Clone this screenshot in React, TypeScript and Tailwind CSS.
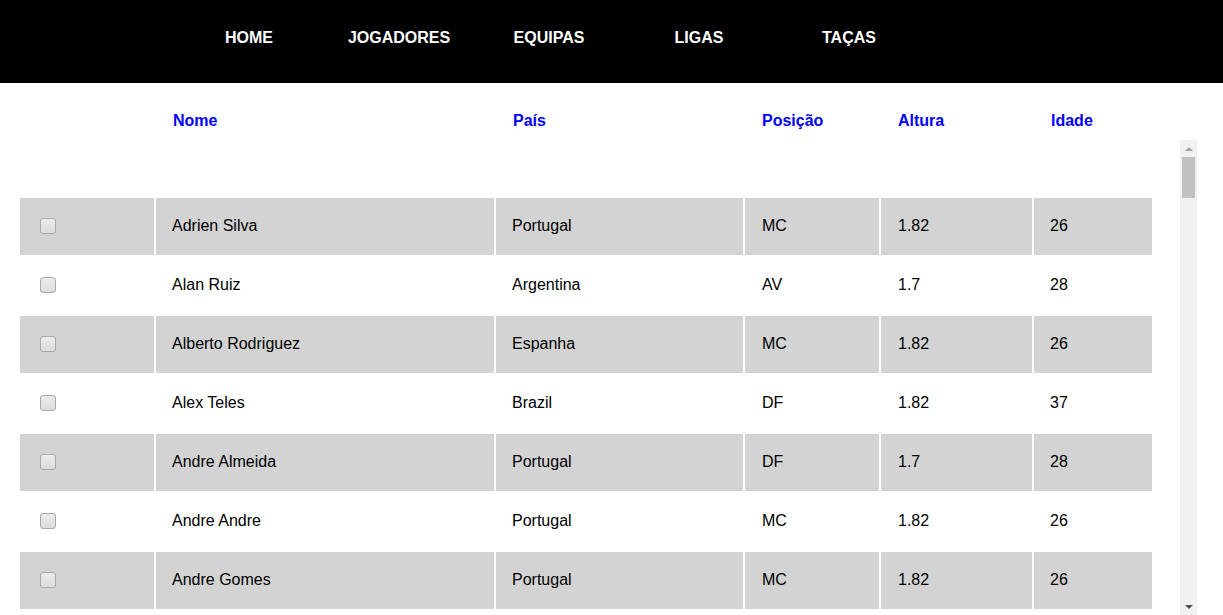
const navItems = ["HOME", "JOGADORES", "EQUIPAS", "LIGAS", "TAÇAS"];

const columns = [
  { label: "Nome", width: "w-[338px]" },
  { label: "País", width: "w-[247px]" },
  { label: "Posição", width: "w-[134px]" },
  { label: "Altura", width: "w-[151px]" },
  { label: "Idade", width: "w-[118px]" },
];

const players = [
  ["Adrien Silva", "Portugal", "MC", "1.82", "26"],
  ["Alan Ruiz", "Argentina", "AV", "1.7", "28"],
  ["Alberto Rodriguez", "Espanha", "MC", "1.82", "26"],
  ["Alex Teles", "Brazil", "DF", "1.82", "37"],
  ["Andre Almeida", "Portugal", "DF", "1.7", "28"],
  ["Andre Andre", "Portugal", "MC", "1.82", "26"],
  ["Andre Gomes", "Portugal", "MC", "1.82", "26"],
];

function Checkbox() {
  return (
    <div className="h-4 w-4 rounded-[3px] border border-[#a8a8a8] bg-gradient-to-b from-[#ececec] to-[#dcdcdc]" />
  );
}

function Scrollbar() {
  return (
    <div className="flex w-[17px] flex-col bg-[#f1f1f1]">
      <div className="flex h-[17px] items-center justify-center">
        <div className="h-0 w-0 border-x-[4px] border-b-[4px] border-x-transparent border-b-[#a3a3a3]" />
      </div>
      <div className="mx-[2px] h-[41px] bg-[#c1c1c1]" />
      <div className="flex-1" />
      <div className="flex h-[17px] items-center justify-center">
        <div className="h-0 w-0 border-x-[4px] border-t-[4px] border-x-transparent border-t-[#505050]" />
      </div>
    </div>
  );
}

export default function App() {
  return (
    <div className="h-[615px] overflow-hidden bg-white font-['Liberation_Sans',Arial,sans-serif] text-base">
      <nav className="flex h-[83px] bg-black pl-[174px] pt-[29px]">
        {navItems.map((item) => (
          <a
            key={item}
            className="w-[150px] text-center font-bold leading-[18px] text-white"
          >
            {item}
          </a>
        ))}
      </nav>

      <div className="flex h-[57px] gap-[2px] pl-[156px] pt-[29px]">
        {columns.map((col) => (
          <div
            key={col.label}
            className={`${col.width} pl-[17px] font-bold leading-[18px] text-[#0000ff]`}
          >
            {col.label}
          </div>
        ))}
      </div>

      <div className="ml-5 flex h-[475px] w-[1177px]">
        <div className="flex-1 overflow-hidden pt-[58px]">
          <div className="flex flex-col gap-[2px]">
            {players.map((p, i) => {
              const bg = i % 2 === 0 ? "bg-[#d3d3d3]" : "bg-white";
              return (
                <div key={p[0]} className="flex h-[57px] gap-[2px] text-black">
                  <div className={`flex w-[134px] items-center pb-[2px] pl-5 ${bg}`}>
                    <Checkbox />
                  </div>
                  {p.map((v, j) => (
                    <div
                      key={j}
                      className={`flex ${columns[j].width} items-center pb-[2px] ${j >= 2 && j <= 3 ? "pl-[17px]" : "pl-4"} ${bg}`}
                    >
                      {v}
                    </div>
                  ))}
                </div>
              );
            })}
          </div>
        </div>
        <Scrollbar />
      </div>
    </div>
  );
}
